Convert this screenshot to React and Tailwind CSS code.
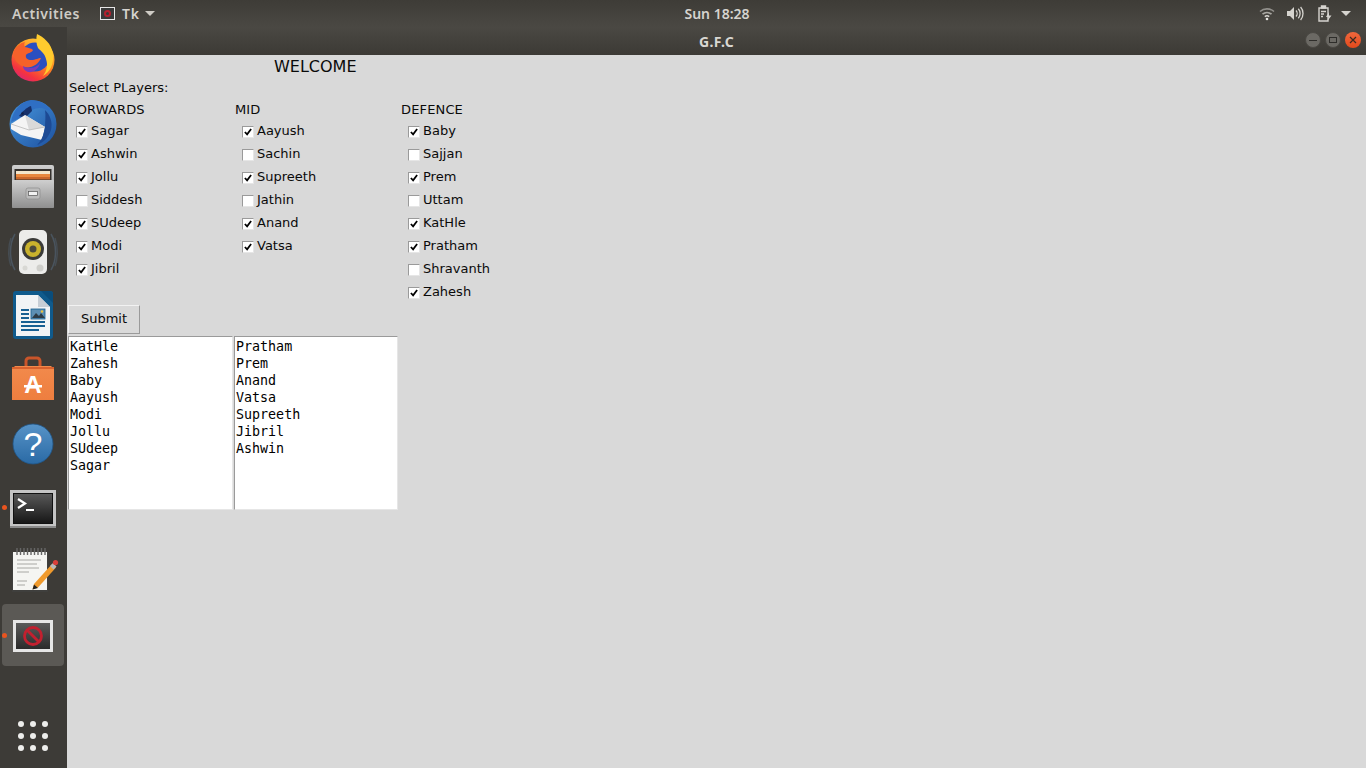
import React from "react";

const forwards = [
  ["Sagar", true],
  ["Ashwin", true],
  ["Jollu", true],
  ["Siddesh", false],
  ["SUdeep", true],
  ["Modi", true],
  ["Jibril", true],
];
const mid = [
  ["Aayush", true],
  ["Sachin", false],
  ["Supreeth", true],
  ["Jathin", false],
  ["Anand", true],
  ["Vatsa", true],
];
const defence = [
  ["Baby", true],
  ["Sajjan", false],
  ["Prem", true],
  ["Uttam", false],
  ["KatHle", true],
  ["Pratham", true],
  ["Shravanth", false],
  ["Zahesh", true],
];
const listOne = ["KatHle", "Zahesh", "Baby", "Aayush", "Modi", "Jollu", "SUdeep", "Sagar"];
const listTwo = ["Pratham", "Prem", "Anand", "Vatsa", "Supreeth", "Jibril", "Ashwin"];

function Firefox() {
  return (
    <svg width="64" height="64" viewBox="0 0 64 64">
      <defs>
        <linearGradient id="ffOuter" x1="0.8" y1="0" x2="0.2" y2="1">
          <stop offset="0" stopColor="#ffd23c" />
          <stop offset="0.45" stopColor="#ff8a1f" />
          <stop offset="0.8" stopColor="#f5333f" />
          <stop offset="1" stopColor="#d6247c" />
        </linearGradient>
      </defs>
      <circle cx="33" cy="32" r="21.5" fill="url(#ffOuter)" />
      <circle cx="35" cy="29" r="14.5" fill="#2a4fc0" />
      <path d="M37 6c6 3 15 9 16 21 1 9-3 17-10 21 4-6 5-11 3-17-1-5-5-8-8-11-2-4-2-10-1-14z" fill="#ffcb2e" />
      <path d="M14 22c3-4 6-7 11-8-1 2-1 3 0 5 3 1 6 1 8 3-1 3-6 3-7 5-1 3 2 5 5 5 5 0 7-2 10-2-2 6-10 11-17 9-6-2-12-8-10-17z" fill="#f5612a" />
      <path d="M23 38c5 3 13 3 17-3-1 6-7 10-12 9-3-1-5-3-5-6z" fill="#7b3bb8" />
    </svg>
  );
}

function Thunderbird() {
  return (
    <svg width="64" height="64" viewBox="0 0 64 64">
      <defs>
        <linearGradient id="tbBlue" x1="0" y1="0" x2="1" y2="1">
          <stop offset="0" stopColor="#4a9be0" />
          <stop offset="1" stopColor="#1c4f9e" />
        </linearGradient>
      </defs>
      <circle cx="33" cy="32" r="23.5" fill="url(#tbBlue)" />
      <path d="M11 30c2-12 10-21 20-22 9 0 17 4 21 13-8-6-14-6-20-3-6 2-10 6-12 8z" fill="#2f6fc4" />
      <path d="M19 24c3-4 8-9 12-10l1 5-7 7z" fill="#16306b" />
      <circle cx="22.5" cy="21.5" r="1.3" fill="#10204a" />
      <path d="M11 32l14-9 20 12-3 13-21-5-10-6z" fill="#f4f4f4" />
      <path d="M25 23l20 12-16 3z" fill="#d9d9d9" />
      <path d="M11 32l18 6 16-3" fill="none" stroke="#b9b9b9" strokeWidth="0.8" />
      <path d="M45 18c5 5 8 12 6 20-2 6-6 12-14 15 5-5 7-11 8-18 0-6 1-11 0-17z" fill="#1d4a94" />
    </svg>
  );
}

function Cabinet() {
  return (
    <svg width="64" height="64" viewBox="0 0 64 64">
      <defs>
        <linearGradient id="cabBody" x1="0" y1="0" x2="0" y2="1">
          <stop offset="0" stopColor="#cfcfcf" />
          <stop offset="1" stopColor="#8f8f8f" />
        </linearGradient>
      </defs>
      <rect x="12" y="9" width="42" height="43" rx="2" fill="url(#cabBody)" />
      <rect x="14.5" y="13" width="37" height="11" fill="#34302c" />
      <rect x="16" y="15" width="34" height="3" fill="#f3e5cb" />
      <rect x="16" y="18" width="34" height="3" fill="#e8873e" />
      <rect x="16" y="21" width="34" height="2.5" fill="#c9662b" />
      <rect x="12" y="24" width="42" height="28" rx="1" fill="url(#cabBody)" />
      <rect x="26" y="32" width="14" height="11" rx="2" fill="#bcbcbc" stroke="#8c8c8c" strokeWidth="0.7" />
      <rect x="28.5" y="35.5" width="9" height="4" fill="#f2f2f2" stroke="#555" strokeWidth="0.7" />
    </svg>
  );
}

function Speaker() {
  return (
    <svg width="64" height="64" viewBox="0 0 64 64">
      <path d="M15 14c-6 10-6 26 0 36" fill="none" stroke="#50606f" strokeWidth="1.5" opacity="0.7" />
      <path d="M11 18c-3 8-3 20 0 28" fill="none" stroke="#50606f" strokeWidth="1.5" opacity="0.5" />
      <path d="M51 14c6 10 6 26 0 36" fill="none" stroke="#50606f" strokeWidth="1.5" opacity="0.7" />
      <path d="M55 18c3 8 3 20 0 28" fill="none" stroke="#50606f" strokeWidth="1.5" opacity="0.5" />
      <rect x="19" y="10" width="28" height="44" rx="5" fill="#ececea" />
      <circle cx="33" cy="29" r="11" fill="#3a3a38" />
      <circle cx="33" cy="29" r="8" fill="#c9b22d" />
      <circle cx="33" cy="29" r="3.5" fill="#4b4a3c" />
      <circle cx="40" cy="48" r="3.5" fill="#cfcfcb" />
      <circle cx="25" cy="48" r="2.5" fill="#d8d8d4" />
    </svg>
  );
}

function Writer() {
  return (
    <svg width="64" height="64" viewBox="0 0 64 64">
      <rect x="13" y="7" width="40" height="48" rx="3" fill="#0f5a8c" />
      <path d="M41 7h9a3 3 0 013 3v9z" fill="#0a4d7c" />
      <path d="M16 11h22l12 12v29H16z" fill="#f1f3f5" />
      <path d="M38 11l12 12H38z" fill="#c7ced6" />
      <rect x="21" y="25" width="8" height="2" fill="#175f92" />
      <rect x="21" y="29" width="8" height="2" fill="#175f92" />
      <rect x="21" y="33" width="8" height="2" fill="#175f92" />
      <rect x="21" y="37" width="24" height="2" fill="#175f92" />
      <rect x="21" y="41" width="24" height="2" fill="#175f92" />
      <rect x="21" y="45" width="18" height="2" fill="#175f92" />
      <rect x="31" y="25" width="14" height="10" fill="#5d8fb3" stroke="#175f92" strokeWidth="0.8" />
      <path d="M32 34l4-5 3 3 2-3 4 5z" fill="#2d3b45" />
      <circle cx="42" cy="27.5" r="1.2" fill="#eec23c" />
    </svg>
  );
}

function Store() {
  return (
    <svg width="64" height="64" viewBox="0 0 64 64">
      <defs>
        <linearGradient id="bagBody" x1="0" y1="0" x2="0" y2="1">
          <stop offset="0" stopColor="#f28a4c" />
          <stop offset="1" stopColor="#ee7e3f" />
        </linearGradient>
      </defs>
      <path d="M26 19v-6a3 3 0 013-3h8a3 3 0 013 3v6" fill="none" stroke="#c9552a" strokeWidth="3" />
      <path d="M15 18h36l3 3v31H12V21z" fill="url(#bagBody)" />
      <rect x="12" y="19" width="42" height="2" fill="#d9622e" />
      <text x="33" y="45" textAnchor="middle" fontFamily="Liberation Sans, sans-serif" fontWeight="700" fontSize="24" fill="#fff">A</text>
      <rect x="24" y="37" width="18" height="2.5" fill="#fff" />
    </svg>
  );
}

function Help() {
  return (
    <svg width="64" height="64" viewBox="0 0 64 64">
      <defs>
        <linearGradient id="helpBlue" x1="0" y1="0" x2="0" y2="1">
          <stop offset="0" stopColor="#5793c7" />
          <stop offset="1" stopColor="#2a6aa5" />
        </linearGradient>
      </defs>
      <circle cx="33" cy="32" r="20" fill="url(#helpBlue)" stroke="#1f5688" strokeWidth="0.8" />
      <text x="33" y="44" textAnchor="middle" fontFamily="Liberation Sans, sans-serif" fontWeight="400" fontSize="34" fill="#fff">?</text>
    </svg>
  );
}

function Terminal() {
  return (
    <svg width="64" height="64" viewBox="0 0 64 64">
      <defs>
        <linearGradient id="termBg" x1="0" y1="0" x2="0" y2="1">
          <stop offset="0" stopColor="#585858" />
          <stop offset="1" stopColor="#171717" />
        </linearGradient>
      </defs>
      <rect x="10" y="14" width="46" height="38" fill="#c4c4c4" />
      <rect x="10" y="50" width="46" height="2" fill="#8a8a8a" />
      <rect x="13" y="17" width="40" height="31" fill="#111" />
      <rect x="14" y="18" width="38" height="29" fill="url(#termBg)" />
      <path d="M18 23l7 4.5-7 4.5" fill="none" stroke="#fff" strokeWidth="2.2" />
      <rect x="26" y="33" width="8" height="2" fill="#fff" />
    </svg>
  );
}

function Notes() {
  return (
    <svg width="64" height="64" viewBox="0 0 64 64">
      <rect x="12" y="13" width="36" height="39" fill="#3f3f3d" />
      <rect x="13" y="12" width="34" height="38" fill="#f5f5f2" />
      <g stroke="#666" strokeWidth="1.4">
        <path d="M17 8v7M20.5 8v7M24 8v7M27.5 8v7M31 8v7M34.5 8v7M38 8v7M41.5 8v7M45 8v7" />
      </g>
      <g stroke="#a8a8a4" strokeWidth="1">
        <path d="M17 20h24M17 24h20M17 28h22M17 32h12M17 41h10M17 45h8" />
      </g>
      <path d="M34 44l18-20 4 3.5-18 20-5.5 2z" fill="#f09a2c" />
      <path d="M50 26l3-3 3.5 3.5-3 3z" fill="#b8b8b8" />
      <circle cx="55.5" cy="22.5" r="2.6" fill="#d9403a" />
      <path d="M32.5 49.5l1.5-5 4 3.5z" fill="#222" />
    </svg>
  );
}

function TkIcon() {
  return (
    <svg width="64" height="64" viewBox="0 0 64 64">
      <defs>
        <linearGradient id="tkBg" x1="0" y1="0" x2="0" y2="1">
          <stop offset="0" stopColor="#5a5a5a" />
          <stop offset="1" stopColor="#2b2b2b" />
        </linearGradient>
      </defs>
      <rect x="13" y="16" width="40" height="32" fill="#e6e6e6" />
      <rect x="16" y="19" width="34" height="26" fill="url(#tkBg)" />
      <circle cx="33" cy="32" r="8.5" fill="none" stroke="#c2202f" strokeWidth="2.8" />
      <path d="M27 26l12 12" stroke="#c2202f" strokeWidth="2.8" />
    </svg>
  );
}

function DockItem({ children, running, active }) {
  return (
    <div className="relative h-[64px] w-[67px] flex items-center">
      {active && <div className="absolute left-[2px] top-0 w-[62px] h-[62px] rounded-[4px] bg-[#5b5955]" />}
      {running && <div className="absolute left-[2px] top-[29px] w-[5px] h-[5px] rounded-full bg-[#e9541f]" />}
      <div className="relative">{children}</div>
    </div>
  );
}

function TopBar() {
  return (
    <div className="relative h-[27px] shrink-0 flex items-center bg-gradient-to-b from-[#3e3c37] to-[#4a4843] text-[#d6d4cf] font-['Noto_Sans',sans-serif] text-[14px] font-semibold">
      <span className="ml-[12px] w-[68px] tracking-[0.55px] text-[#cfccc6]">Activities</span>
      <div className="ml-[20px] flex items-center">
        <div className="w-[15px] h-[13px] bg-[#3a3a3a] border border-[#e6e6e6] flex items-center justify-center">
          <div className="w-[7px] h-[7px] rounded-full border-2 border-[#b5202e]" />
        </div>
        <span className="ml-[7px] tracking-[0.8px]">Tk</span>
        <div className="ml-[5px] w-0 h-0 border-l-[5px] border-r-[5px] border-t-[5px] border-l-transparent border-r-transparent border-t-[#cfccc6]" />
      </div>
      <div className="absolute left-[683px] w-[68px] text-center whitespace-nowrap">Sun 18:28</div>
      <div className="ml-auto mr-[15px] flex items-center">
        <svg width="16" height="14" viewBox="0 0 16 14" fill="none" stroke="#d6d4cf" strokeWidth="1.6">
          <path d="M1 4.5c4-3.5 10-3.5 14 0" opacity="0.55" />
          <path d="M3.5 7.2c2.6-2.2 6.4-2.2 9 0" opacity="0.7" />
          <path d="M5.8 9.6c1.3-1 3.1-1 4.4 0" />
          <circle cx="8" cy="12" r="1.3" fill="#e8e6e1" stroke="none" />
        </svg>
        <svg width="17" height="15" viewBox="0 0 17 15" fill="#d6d4cf" className="ml-[12px]">
          <path d="M0 5h3l4-4v13l-4-4H0z" />
          <path d="M9 4.5c1.5 1.6 1.5 4.4 0 6M11.3 2.8c2.4 2.6 2.4 6.8 0 9.4M13.6 1c3.2 3.5 3.2 9.5 0 13" fill="none" stroke="#d6d4cf" strokeWidth="1.3" />
        </svg>
        <svg width="16" height="17" viewBox="0 0 16 17" fill="none" stroke="#d6d4cf" strokeWidth="1.4" className="ml-[13px]">
          <path d="M2 3h9v13H2z" />
          <path d="M4.5 1h4v2h-4z" fill="#d6d4cf" />
          <path d="M4 6.5h5M4 9h3M4 11.5h2" />
          <path d="M12 7l-3 5h2.5l-1 4 4-5.5H12z" fill="#d6d4cf" stroke="none" />
        </svg>
        <div className="ml-[8px] w-0 h-0 border-l-[5px] border-r-[5px] border-t-[5px] border-l-transparent border-r-transparent border-t-[#d6d4cf]" />
      </div>
    </div>
  );
}

function TitleBar() {
  return (
    <div className="relative h-[28px] shrink-0 flex items-center bg-gradient-to-b from-[#4a4843] to-[#3c3a35]">
      <div className="w-full text-center pt-[1px] text-[#d9d7d2] font-['Noto_Sans',sans-serif] text-[14px] font-bold tracking-[0.4px]">G.F.C</div>
      <div className="absolute right-[5px] top-[5px] flex gap-[4px]">
        <div className="w-[16px] h-[16px] rounded-full bg-[#6b6964] border border-[#4a4843] flex items-center justify-center">
          <div className="w-[8px] h-[1px] bg-[#2e2d2a]" />
        </div>
        <div className="w-[16px] h-[16px] rounded-full bg-[#6b6964] border border-[#4a4843] flex items-center justify-center">
          <div className="w-[8px] h-[6px] border border-[#2e2d2a]" />
        </div>
        <div className="w-[16px] h-[16px] rounded-full bg-gradient-to-b from-[#f0673c] to-[#e2491a] flex items-center justify-center">
          <svg width="8" height="8" viewBox="0 0 8 8" stroke="#3a2a20" strokeWidth="1.2">
            <path d="M1 1l6 6M7 1l-6 6" />
          </svg>
        </div>
      </div>
    </div>
  );
}

function CheckRow({ name, checked }) {
  return (
    <div className="h-[23px] flex items-center pl-[8px]">
      <div className="w-[12px] h-[12px] bg-white border border-t-[#9a9a9a] border-l-[#9a9a9a] border-r-[#e6e6e6] border-b-[#e6e6e6] flex items-center justify-center">
        {checked && (
          <svg width="8" height="8" viewBox="0 0 9 9" fill="none" stroke="#000" strokeWidth="2">
            <path d="M1 4.5l2.5 2.7L8 1.2" />
          </svg>
        )}
      </div>
      <span className="ml-[3px] pb-[2px]">{name}</span>
    </div>
  );
}

function PlayerColumn({ title, players }) {
  return (
    <div className="w-[166px]">
      <div className="h-[22px] flex items-center pl-[1px] pt-[2px] tracking-[0.15px]">{title}</div>
      {players.map(([name, checked]) => (
        <CheckRow key={name} name={name} checked={checked} />
      ))}
    </div>
  );
}

function ListBox({ items, width }) {
  return (
    <div className={`${width} h-[174px] bg-white border border-t-[#9a9a9a] border-l-[#9a9a9a] border-r-[#e6e6e6] border-b-[#e6e6e6] pl-[1px] pt-[1px] font-['DejaVu_Sans_Mono',monospace] text-[13.33px] leading-[17px] text-black`}>
      {items.map((item) => (
        <div key={item}>{item}</div>
      ))}
    </div>
  );
}

export default function App() {
  return (
    <div className="h-screen w-[1366px] overflow-hidden flex flex-col bg-[#3d3a36]">
      <TopBar />
      <div className="flex-1 flex min-h-0">
        <div className="w-[67px] shrink-0 flex flex-col pt-[1px] bg-[#3d3b37]">
          <DockItem><Firefox /></DockItem>
          <DockItem><Thunderbird /></DockItem>
          <DockItem><Cabinet /></DockItem>
          <DockItem><Speaker /></DockItem>
          <DockItem><Writer /></DockItem>
          <DockItem><Store /></DockItem>
          <DockItem><Help /></DockItem>
          <DockItem running><Terminal /></DockItem>
          <DockItem><Notes /></DockItem>
          <DockItem running active><TkIcon /></DockItem>
          <div className="mt-auto mb-[17px] ml-[18px] grid grid-cols-3 gap-x-[6px] gap-y-[6px] w-[30px]">
            {[1, 2, 3, 4, 5, 6, 7, 8, 9].map((n) => (
              <div key={n} className="w-[6px] h-[6px] rounded-full bg-[#eeeeec]" />
            ))}
          </div>
        </div>
        <div className="flex-1 flex flex-col min-w-0">
          <TitleBar />
          <div className="flex-1 pl-[1px] bg-[#d9d9d9] text-[#0a0a0a] font-['DejaVu_Sans',sans-serif] text-[13px]">
            <div className="h-[23px] flex items-center pl-[206px] text-[16px]">WELCOME</div>
            <div className="h-[20px] flex items-center pl-[1px]">Select PLayers:</div>
            <div className="flex">
              <PlayerColumn title="FORWARDS" players={forwards} />
              <PlayerColumn title="MID" players={mid} />
              <PlayerColumn title="DEFENCE" players={defence} />
            </div>
            <button className="mt-[1px] block w-[72px] h-[29px] pb-[1px] bg-[#d9d9d9] border border-t-[#f2f2f2] border-l-[#f2f2f2] border-r-[#9a9a9a] border-b-[#9a9a9a]">
              Submit
            </button>
            <div className="mt-[2px] flex gap-[1px]">
              <ListBox items={listOne} width="w-[165px]" />
              <ListBox items={listTwo} width="w-[164px]" />
            </div>
          </div>
        </div>
      </div>
    </div>
  );
}
